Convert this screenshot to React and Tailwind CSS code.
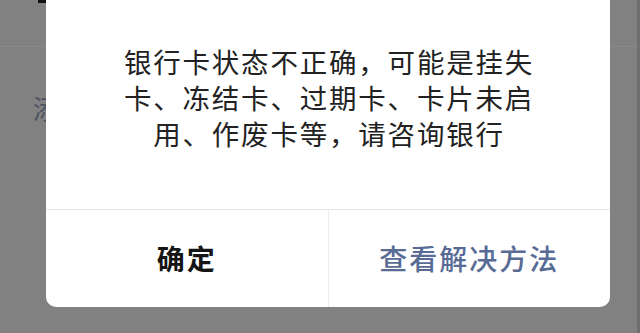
import React from "react";

export default function App() {
  const font = { fontFamily: '"Noto Sans CJK SC", "Noto Sans", sans-serif' };
  return (
    <div
      className="relative w-[640px] h-[333px] overflow-hidden bg-[#818181]"
      style={font}
    >
      {/* underlying page (dimmed) */}
      <div className="absolute left-0 top-[46px] w-[46px] h-px bg-[#8a8a8a]" />
      <div className="absolute left-[610px] top-[46px] w-[30px] h-px bg-[#8a8a8a]" />
      <div className="absolute left-[33px] top-[90px] text-[26px] leading-[36px] text-[#4d5263]">
        添
      </div>
      <div className="absolute left-[38px] top-0 w-[10px] h-[3px] bg-[#111]" />
      <div className="absolute right-0 top-0 w-[3px] h-full bg-[#6f6f6f]" />

      {/* dialog */}
      <div className="relative ml-[46px] w-[564px] h-[307px] bg-white rounded-b-[10px] flex flex-col">
        <div className="h-[209px] pt-[43px] pl-[2px] flex flex-col items-center text-[27.5px] leading-[36px] tracking-[1.8px] text-[#222]">
          <div>银行卡状态不正确，可能是挂失</div>
          <div>卡、冻结卡、过期卡、卡片未启</div>
          <div>用、作废卡等，请咨询银行</div>
        </div>
        <div className="h-px bg-[#e6e6e6]" />
        <div className="flex flex-1">
          <div className="flex-1 flex items-center justify-center pb-[2px] text-[28px] font-semibold tracking-[2px] text-[#151515]">
            确定
          </div>
          <div className="w-px bg-[#ededed]" />
          <div className="flex-1 flex items-center justify-center pb-[2px] text-[28px] font-medium tracking-[2px] text-[#576b95]">
            查看解决方法
          </div>
        </div>
      </div>
    </div>
  );
}
